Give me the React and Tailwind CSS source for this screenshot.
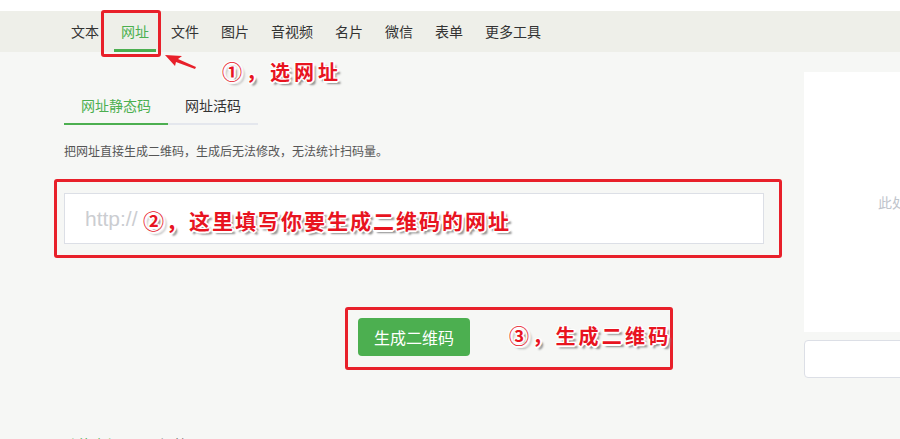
import React from "react";

const navItems = ["文本", "网址", "文件", "图片", "音视频", "名片", "微信", "表单", "更多工具"];

const annot =
  "absolute whitespace-nowrap font-bold text-[#e8141f] [font-family:'Noto_Sans_CJK_SC','Noto_Sans',sans-serif] [text-shadow:1px_1px_0_#fff,-1px_-1px_0_#fff,1px_-1px_0_#fff,-1px_1px_0_#fff,0_2px_0_#fff,2px_0_0_#fff,3px_3px_2px_#8a8a8a]";

export default function App() {
  return (
    <div className="relative w-[900px] h-[439px] overflow-hidden bg-[#f6f7f5] text-[#333] [font-family:'Noto_Sans_CJK_SC','Noto_Sans',sans-serif]">
      <div className="h-[11px] bg-white" />
      <nav className="flex h-[41px] bg-[#eeefe9] pl-[60px]">
        {navItems.map((t) => {
          const active = t === "网址";
          return (
            <div key={t} className="flex h-full px-[4px]">
              <span
                className={
                  "flex h-full items-center px-[7px] pt-[3px] border-b-[3px] text-[14px] " +
                  (active ? "border-[#4caf50] text-[#4caf50]" : "border-transparent text-[#333]")
                }
              >
                {t}
              </span>
            </div>
          );
        })}
      </nav>

      <div className="flex items-start">
        <div className="ml-[64px] w-[700px] shrink-0 pt-[35px]">
          <div className="flex">
            <div className="flex h-[38px] items-center px-[17px] border-b-2 border-[#4caf50] text-[14px] text-[#4caf50]">
              网址静态码
            </div>
            <div className="flex h-[38px] items-center px-[17px] border-b-2 border-[#e4e7ed] text-[14px] text-[#333]">
              网址活码
            </div>
          </div>
          <p className="mt-[17px] text-[12px] leading-[18px] text-[#555]">
            把网址直接生成二维码，生成后无法修改，无法统计扫码量。
          </p>
          <div className="mt-[33px] flex h-[51px] items-center border border-[#dcdfe6] bg-white px-[20px] text-[21px] text-[#cbcdd1] [font-family:'Liberation_Sans',sans-serif]">
            http://
          </div>
          <div className="mt-[74px] flex justify-center">
            <button className="flex h-[38px] w-[112px] items-center justify-center rounded-[4px] bg-[#4caf50] text-[16px] text-white">
              生成二维码
            </button>
          </div>
          <div className="mt-[78px] flex gap-[40px] text-[14px] leading-[20px]">
            <span className="text-[#4caf50]">功能介绍</span>
            <span className="text-[#666]">问答区</span>
          </div>
        </div>

        <div className="ml-[40px] mt-[20px] w-[246px] shrink-0">
          <div className="flex h-[260px] items-center justify-center bg-white text-[14px] text-[#c0c4cc]">
            此处显示二维码
          </div>
          <div className="mt-[8px] h-[38px] rounded-[4px] border border-[#dcdfe6] bg-white" />
        </div>
      </div>

      {/* annotation boxes */}
      <div className="absolute left-[101px] top-[10px] h-[47px] w-[60px] rounded-[3px] border-[3px] border-[#e8202a]" />
      <div className="absolute left-[54px] top-[179px] h-[79px] w-[728px] rounded-[3px] border-[3px] border-[#e8202a]" />
      <div className="absolute left-[345px] top-[307px] h-[63px] w-[328px] rounded-[3px] border-[3px] border-[#e8202a]" />

      {/* arrow */}
      <svg className="absolute left-[160px] top-[50px]" width="42" height="24" viewBox="0 0 42 24">
        <path d="M5 5 L22 6 L18 9 L36 17 L35 19 L16 12 L15 16 Z" fill="#e8202a" />
      </svg>

      <div className={annot + " left-[222px] top-[58px] text-[20px] leading-[28px] tracking-[4px]"}>①，选网址</div>
      <div className={annot + " left-[143px] top-[205px] text-[21px] leading-[30px] tracking-[2px]"}>
        ②，这里填写你要生成二维码的网址
      </div>
      <div className={annot + " left-[509px] top-[322px] text-[20px] leading-[28px] tracking-[3.2px]"}>③，生成二维码</div>
    </div>
  );
}
